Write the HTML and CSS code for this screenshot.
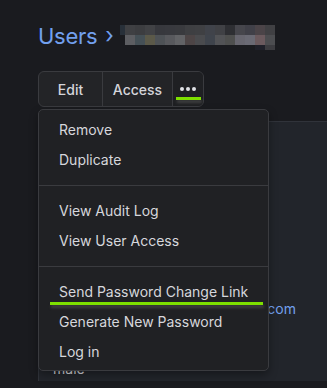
FILE: index.html
```html
<!DOCTYPE html>
<html>
<head>
<meta charset="utf-8">
<link rel="stylesheet" href="styles.css">
</head>
<body>
<div class="page">
  <h1 class="crumbs">
    <span class="crumb-link">Users</span>
    <span class="chev">›</span>
    <span class="mosaic" aria-label="redacted">
      <span style="background:#283039"></span><span style="background:#3f4043"></span><span style="background:#3c3d40"></span><span style="background:#414245"></span><span style="background:#37383d"></span><span style="background:#38393e"></span><span style="background:#393a3e"></span><span style="background:#3e3f42"></span><span style="background:#3f4043"></span><span style="background:#40434a"></span><span style="background:#404145"></span><span style="background:#2e2f33"></span><span style="background:#46464c"></span><span style="background:#404048"></span><span style="background:#4b4448"></span><span style="background:#404043"></span>
      <span></span><span style="background:#5d5e62"></span><span style="background:#455056"></span><span style="background:#5b5949"></span><span style="background:#4e5256"></span><span style="background:#58595d"></span><span style="background:#626366"></span><span style="background:#4d4546"></span><span style="background:#4a4b4e"></span><span style="background:#3f444c"></span><span style="background:#525356"></span><span style="background:#4e4f4e"></span><span style="background:#67666f"></span><span style="background:#6a6a74"></span><span style="background:#6b5a5e"></span><span style="background:#4c4d50"></span>
      <span></span><span></span><span></span><span></span><span></span><span></span><span></span><span></span><span></span><span></span><span></span><span></span><span></span><span></span><span style="background:#1f2029"></span><span style="background:#3c3c40"></span>
    </span>
  </h1>

  <div class="toolbar">
    <div class="btn-group">
      <button class="btn btn-edit">Edit</button>
      <button class="btn btn-access">Access</button>
      <button class="btn btn-more"><span class="dot"></span><span class="dot"></span><span class="dot"></span></button>
    </div>
    <span class="mark mark-more"></span>

    <div class="menu">
      <div class="menu-item">Remove</div>
      <div class="menu-item">Duplicate</div>
      <div class="menu-sep"></div>
      <div class="menu-item">View Audit Log</div>
      <div class="menu-item">View User Access</div>
      <div class="menu-sep"></div>
      <div class="menu-item">Send Password Change Link</div>
      <div class="menu-item">Generate New Password</div>
      <div class="menu-item">Log in</div>
      <span class="mark mark-send"></span>
    </div>
  </div>

  <div class="panel">
    <div class="field-row">user.name@example.com</div>
    <div class="field-plain">male</div>
  </div>
</div>
</body>
</html>
```

FILE: styles.css
```css
* { box-sizing: border-box; }
html, body {
  margin: 0;
  padding: 0;
  background: #1a1b1f;
  width: 327px;
  height: 388px;
  overflow: hidden;
}
body {
  font-family: Inter, "Noto Sans", sans-serif;
  color: #d4d5da;
}
.page {
  padding: 20px 0 0 38px;
}
.crumbs {
  margin: 0;
  display: flex;
  align-items: center;
  height: 32px;
  font-size: 22px;
  letter-spacing: -0.3px;
  font-weight: 400;
  line-height: 32px;
  color: #72a0ee;
}
.chev {
  margin-left: 8px;
  font-size: 22px;
  position: relative;
  top: -1px;
}
.mosaic {
  margin-left: 7px;
  display: grid;
  grid-template-columns: 5px repeat(15, 10px);
  grid-template-rows: 10px 10px 5px;
  align-self: flex-start;
  margin-top: 5px;
}
.mosaic span { display: block; }

.toolbar {
  position: relative;
  margin-top: 19px;
}
.btn-group {
  display: inline-flex;
  height: 36px;
  border: 1px solid #3a3b3f;
  border-radius: 6px;
  background: #232427;
  overflow: hidden;
}
.btn {
  font-family: inherit;
  font-size: 14px;
  font-weight: 500;
  color: #d4d5da;
  background: transparent;
  border: 0;
  padding: 0;
  height: 100%;
  display: flex;
  align-items: center;
  justify-content: center;
}
.btn-edit { width: 64px; border-right: 1px solid #3a3b3f; }
.btn-access { width: 70px; border-right: 1px solid #3a3b3f; }
.btn-more {
  width: 30px;
  gap: 2px;
  background: #1f2023;
  padding-bottom: 1px;
}
.dot {
  width: 4px;
  height: 4px;
  border-radius: 50%;
  background: #e0e1e6;
}
.mark {
  position: absolute;
  height: 3px;
  background: #7ee000;
  box-shadow: 1px 3px 3px rgba(70, 70, 70, 0.9);
}
.mark-more {
  left: 138px;
  top: 26px;
  width: 25px;
}
.menu {
  position: absolute;
  z-index: 2;
  left: 0;
  top: 38px;
  width: 231px;
  background: #202124;
  border: 1px solid #3a3b3f;
  border-radius: 5px;
  padding: 5px 0 3px;
  box-shadow: 0 4px 8px rgba(0,0,0,0.35);
}
.menu-item {
  height: 30px;
  line-height: 30px;
  padding-left: 20px;
  font-size: 14px;
  color: #d6d7dc;
  white-space: nowrap;
}
.menu-sep {
  height: 1px;
  background: #3a3b3f;
  margin: 10px 0;
}
.mark-send {
  left: 11px;
  top: 192px;
  width: 213px;
}
.panel {
  margin-top: 14px;
  height: 260px;
  background: #22252b;
  border-top: 1px solid #30333a;
  border-left: 1px solid #30333a;
  padding: 0 0 0 14px;
}
.field-row {
  width: 243px;
  text-align: right;
  margin-top: 177px;
  font-size: 14px;
  line-height: 20px;
  color: #72a0ee;
}
.field-plain {
  margin-top: 40px;
  font-size: 14px;
  line-height: 20px;
  color: #d6d7dc;
}
```
